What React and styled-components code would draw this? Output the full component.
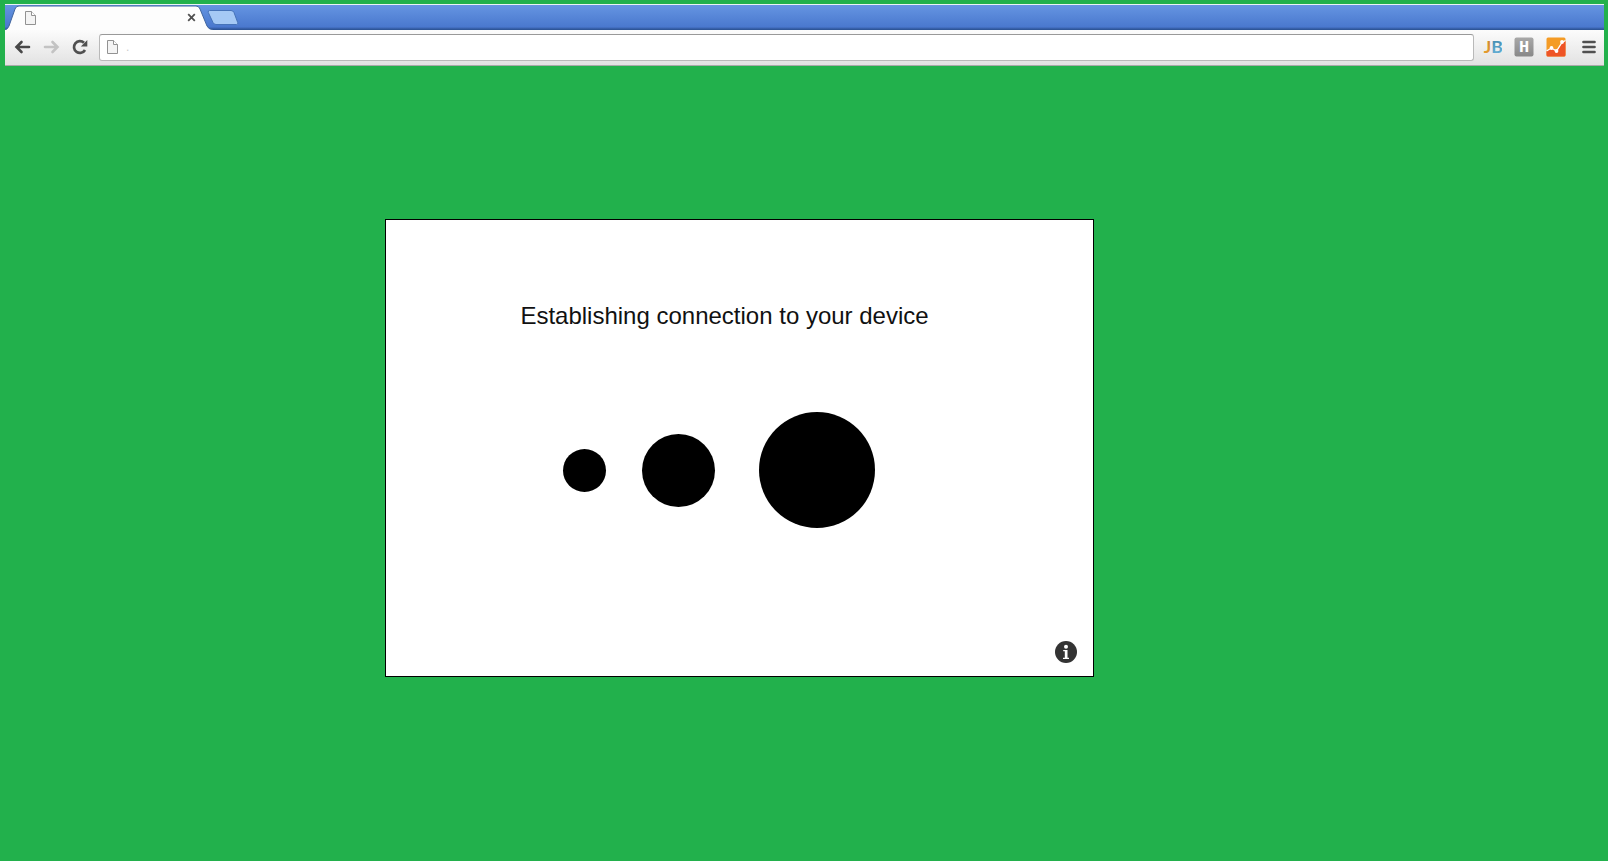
import React from "react";
import styled, { createGlobalStyle } from "styled-components";

const GlobalStyle = createGlobalStyle`
  *, *::before, *::after { box-sizing: border-box; }
  html, body, #root { min-height: 100vh; }
  body {
    margin: 0;
    background: #22b14c;
    color: #111;
    font-family: "Liberation Sans", Arial, sans-serif;
  }
`;

const Page = styled.div`
  display: flex;
  flex-direction: column;
  min-height: 100vh;
  padding: 4px 4px 0 5px;
`;

const Browser = styled.header`
  display: flex;
  flex-direction: column;
`;

const TabStrip = styled.nav`
  display: flex;
  align-items: flex-end;
  height: 26px;
  border-top: 1px solid #e9f3f4;
  background: linear-gradient(#6595e2, #4a78ce 22px, #3c66b4 23px, #29508f);
`;

const Tab = styled.div`
  position: relative;
  display: flex;
  align-items: center;
  justify-content: space-between;
  width: 208px;
  height: 25px;
  padding: 0 17px 0 20px;
`;

const TabShape = styled.svg`
  position: absolute;
  inset: 0;
`;

const IconButton = styled.button`
  position: relative;
  display: flex;
  align-items: center;
  justify-content: center;
  flex: none;
  width: ${(p) => p.$width}px;
  height: ${(p) => p.$height || 20}px;
  padding: 0;
  border: 0;
  background: none;
`;

const TabIcon = styled.span`
  position: relative;
  display: flex;
`;

const NewTab = styled(IconButton)`
  align-self: center;
  margin-left: -6px;
`;

const Toolbar = styled.div`
  display: flex;
  align-items: center;
  gap: 12px;
  height: 36px;
  padding: 0 6px 1px 8px;
  border-bottom: 1px solid #a9aaa9;
  background: linear-gradient(#fcfcfc, #e2e2e2);
`;

const Navigation = styled.div`
  display: flex;
  gap: 11px;
`;

const AddressBar = styled.label`
  display: flex;
  flex: 1;
  align-items: center;
  gap: 7px;
  height: 27px;
  margin-left: -2px;
  padding: 0 7px;
  border: 1px solid #b9b9b9;
  border-top-color: #999;
  border-radius: 3px;
  background: #fff;
`;

const AddressInput = styled.input`
  flex: 1;
  min-width: 0;
  padding: 0;
  border: 0;
  outline: 0;
  background: none;
  color: #ccc;
  font: 12px/20px "Liberation Sans", Arial, sans-serif;
`;

const Extensions = styled.div`
  display: flex;
  gap: 12px;
  margin: 0 2px 0 -4px;
`;

const Main = styled.main`
  display: grid;
  grid-template-columns: 380fr 709fr 510fr;
  padding-top: 153px;
`;

const Dialog = styled.section`
  grid-column: 2;
  display: flex;
  flex-direction: column;
  min-height: 458px;
  padding: 82px 16px 13px;
  border: 1px solid #000;
  background: #fff;
`;

const Message = styled.h1`
  margin: 0;
  padding-right: 30px;
  font-size: 24px;
  font-weight: 400;
  line-height: 28px;
  text-align: center;
`;

const Progress = styled.div`
  display: flex;
  align-items: center;
  justify-content: center;
  margin-top: 82px;
  padding-right: 42px;
`;

const Dot = styled.span`
  width: ${(p) => p.$size}px;
  height: ${(p) => p.$size}px;
  margin-left: ${(p) => p.$gap || 0}px;
  border-radius: 50%;
  background: #000;
`;

const DialogFooter = styled.footer`
  display: flex;
  justify-content: flex-end;
  margin-top: auto;
`;

const PageIcon = () => (
  <svg width="12" height="16" viewBox="0 0 12 16" aria-hidden="true">
    <path d="M.5 1.5h6l4 4v9H.5z" fill="#f4f4f4" stroke="#929292" />
    <path d="M6.500 1.500v4h4" fill="#fff" stroke="#929292" />
  </svg>
);

const Arrow = ({ color, flipped }) => (
  <svg width="17" height="14" viewBox="0 0 17 14" aria-hidden="true">
    <g transform={flipped ? "matrix(-1 0 0 1 17 0)" : undefined}>
      <path d="M7.500 2 2.500 7l5 5M3 7H15" fill="none" stroke={color} strokeWidth="2.600" strokeLinecap="round" />
    </g>
  </svg>
);

const ReloadIcon = () => (
  <svg width="18" height="18" viewBox="0 0 18 18" aria-hidden="true">
    <path d="M13 4.800A5.900 5.900 0 1 0 14 12" fill="none" stroke="#505050" strokeWidth="2.700" />
    <path d="M16.300 2v6.500H9.800z" fill="#505050" />
  </svg>
);

const JBIcon = () => (
  <svg width="24" height="28" viewBox="-2 -4 24 28" aria-hidden="true">
    <defs>
      <linearGradient id="jb-orange" x2="0" y2="1">
        <stop stopColor="#c98532" />
        <stop offset="1" stopColor="#eaa02c" />
      </linearGradient>
      <linearGradient id="jb-blue" x2="0" y2="1">
        <stop stopColor="#3f83a8" />
        <stop offset="1" stopColor="#69b5db" />
      </linearGradient>
    </defs>
    <text y="17" fontFamily="Lato, sans-serif" fontWeight="700" fontSize="21">
      <tspan x="0" fill="url(#jb-orange)">J</tspan>
      <tspan fill="url(#jb-blue)">B</tspan>
    </text>
  </svg>
);

const HIcon = () => (
  <svg width="20" height="20" viewBox="0 0 20 20" aria-hidden="true">
    <defs>
      <linearGradient id="h-gray" x2="0" y2="1">
        <stop stopColor="#a8a8a8" />
        <stop offset="1" stopColor="#888" />
      </linearGradient>
    </defs>
    <rect x=".5" y=".5" width="19" height="19" rx="2" fill="url(#h-gray)" />
    <text x="10" y="15" fill="#fff" textAnchor="middle" fontFamily="'Liberation Mono', monospace" fontWeight="700" fontSize="17">H</text>
  </svg>
);

const AnalyticsIcon = () => (
  <svg width="20" height="20" viewBox="0 0 20 20" aria-hidden="true">
    <rect x=".5" y=".5" width="19" height="19" rx="1.500" fill="#f49b25" />
    <path d="M.5 14 6 10l5 4 5-8.500 3.500-2V18q0 1.500-1.500 1.500H2Q.5 19.500.5 18z" fill="#ee5426" />
    <path d="M.5 14 5.500 11l5 3 5.500-8.500 3.500-2" fill="none" stroke="#fff" strokeWidth="1.300" />
    <g fill="#fff">
      <circle cx="5.500" cy="11" r="1.900" />
      <circle cx="10.500" cy="14" r="1.900" />
      <circle cx="16" cy="5" r="1.900" />
    </g>
  </svg>
);

const MenuIcon = () => (
  <svg width="14" height="14" viewBox="0 0 14 14" aria-hidden="true">
    <path d="M1.500 2h11M1.500 7h11M1.500 12h11" stroke="#505050" strokeWidth="2.700" strokeLinecap="round" />
  </svg>
);

const InfoIcon = () => (
  <svg width="22" height="22" viewBox="0 0 22 22" aria-hidden="true">
    <circle cx="11" cy="11" r="11" fill="#333" />
    <circle cx="11" cy="5.800" r="2" fill="#fff" />
    <path d="M8.200 9h4.300v7.700h1.500V18H8v-1.300h1.800v-6.400H8.200z" fill="#fff" />
  </svg>
);

export default function App() {
  return (
    <>
      <GlobalStyle />
      <Page>
        <Browser>
          <TabStrip aria-label="Tabs">
            <Tab>
              <TabShape width="208" height="25" viewBox="0 0 208 25" aria-hidden="true">
                <path d="M0 25Q3 24 4 21L10 4Q11 1 14 1H191Q194 1 195 4L202 21Q203.500 24.500 208 25z" fill="#fdfdfd" />
                <path d="M0 25Q3 24 4 21L10 4Q11 1 14 1H191Q194 1 195 4L202 21Q203.500 24.500 208 24.500" fill="none" stroke="#41669f" />
              </TabShape>
              <TabIcon><PageIcon /></TabIcon>
              <IconButton $width={9} aria-label="Close tab">
                <svg width="9" height="9" viewBox="0 0 9 9" aria-hidden="true">
                  <path d="m1.200 1.200 6.600 6.600m0-6.600-6.600 6.600" stroke="#505050" strokeWidth="1.800" />
                </svg>
              </IconButton>
            </Tab>
            <NewTab $width={32} aria-label="New tab">
              <svg width="32" height="16" viewBox="0 0 32 16" aria-hidden="true">
                <path d="M2.500.5H24q2 0 3 2l3.700 10q.8 2-1.200 2H9q-2 0-3-2L1.300 2.500Q.8.5 2.500.5z" fill="#a5c9f5" stroke="#4673b9" />
              </svg>
            </NewTab>
          </TabStrip>
          <Toolbar>
            <Navigation>
              <IconButton $width={18} aria-label="Back"><Arrow color="#484848" /></IconButton>
              <IconButton $width={18} aria-label="Forward"><Arrow color="#c3c3c3" flipped /></IconButton>
              <IconButton $width={18} aria-label="Reload"><ReloadIcon /></IconButton>
            </Navigation>
            <AddressBar>
              <PageIcon />
              <AddressInput aria-label="Address" defaultValue="." />
            </AddressBar>
            <Extensions>
              <IconButton $width={20} aria-label="JB"><JBIcon /></IconButton>
              <IconButton $width={20} aria-label="H"><HIcon /></IconButton>
              <IconButton $width={20} aria-label="Analytics"><AnalyticsIcon /></IconButton>
            </Extensions>
            <IconButton $width={18} aria-label="Menu"><MenuIcon /></IconButton>
          </Toolbar>
        </Browser>
        <Main>
          <Dialog aria-live="polite">
            <Message>Establishing connection to your device</Message>
            <Progress>
              <Dot $size={43} />
              <Dot $size={73} $gap={36} />
              <Dot $size={116} $gap={44} />
            </Progress>
            <DialogFooter>
              <IconButton $width={22} $height={22} aria-label="Information"><InfoIcon /></IconButton>
            </DialogFooter>
          </Dialog>
        </Main>
      </Page>
    </>
  );
}
